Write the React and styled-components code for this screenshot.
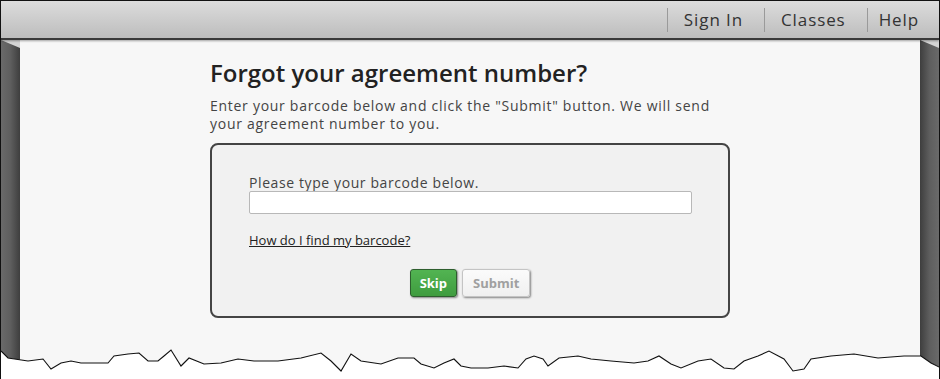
import React from "react";
import styled, { createGlobalStyle } from "styled-components";

const GlobalStyle = createGlobalStyle`
  html, body {
    margin: 0;
    padding: 0;
    background: #ffffff;
    font-family: "Open Sans", "Liberation Sans", sans-serif;
  }
`;

const navItems = ["Sign In", "Classes", "Help"];

// torn paper edge, sampled from the screenshot
const tear = [
  [0, 350], [7, 357], [27, 360], [42, 358], [50, 368], [60, 362], [70, 360],
  [80, 362], [107, 362], [113, 355], [127, 353], [138, 352], [147, 360],
  [157, 360], [163, 355], [170, 349], [180, 365], [188, 357], [203, 363],
  [220, 362], [237, 358], [253, 360], [277, 360], [300, 357], [320, 352],
  [330, 360], [340, 370], [350, 353], [360, 360], [380, 363], [397, 357],
  [413, 357], [420, 363], [433, 367], [443, 362], [453, 358], [460, 365],
  [470, 367], [487, 367], [503, 365], [517, 367], [525, 358], [533, 355],
  [542, 358], [547, 365], [558, 357], [577, 355], [590, 358], [610, 360],
  [633, 362], [647, 360], [658, 355], [670, 363], [680, 367], [697, 360],
  [710, 358], [723, 367], [733, 368], [743, 360], [757, 355], [768, 350],
  [783, 358], [792, 370], [803, 368], [810, 358], [830, 355], [853, 353],
  [877, 357], [903, 355], [920, 355], [930, 362], [940, 367],
];

function App() {
  const line = tear.map((p) => p.join(",")).join(" ");
  const fill = `${line} 940,379 0,379`;

  return (
    <>
      <GlobalStyle />
      <Frame>
        <TopBar>
          <Nav>
            {navItems.map((item) => (
              <NavLink key={item}>{item}</NavLink>
            ))}
          </Nav>
        </TopBar>
        <Body>
          <SideStrip />
          <Content>
            <Column>
              <Title>Forgot your agreement number?</Title>
              <Intro>
                Enter your barcode below and click the "Submit" button. We will
                send your agreement number to you.
              </Intro>
              <Card>
                <Label>Please type your barcode below.</Label>
                <Input type="text" />
                <HelpLink href="#">How do I find my barcode?</HelpLink>
                <Buttons>
                  <Button primary>Skip</Button>
                  <Button>Submit</Button>
                </Buttons>
              </Card>
            </Column>
          </Content>
          <SideStrip right />
        </Body>
        <Tear viewBox="0 0 940 379" preserveAspectRatio="none">
          <polygon points={fill} fill="#ffffff" />
          <polyline points={line} fill="none" stroke="#111" strokeWidth="1.1" />
        </Tear>
      </Frame>
    </>
  );
}

export default App;

const Frame = styled.div`
  position: relative;
  width: 940px;
  height: 379px;
  overflow: hidden;
  display: flex;
  flex-direction: column;
  box-sizing: border-box;
  border: 1px solid #111;
  border-bottom: none;
`;

const TopBar = styled.header`
  height: 37px;
  flex-shrink: 0;
  background: linear-gradient(to bottom, #dcdcdc, #bdbdbd);
  border-bottom: 2px solid #3a3a3a;
  box-shadow: 0 1px 2px rgba(0, 0, 0, 0.35);
  display: flex;
  justify-content: flex-end;
  align-items: center;
  position: relative;
  z-index: 1;
`;

const Nav = styled.nav`
  display: flex;
  align-items: center;
  height: 100%;
`;

const NavLink = styled.span`
  display: flex;
  align-items: center;
  height: 24px;
  padding: 0 21px 0 16px;
  border-left: 1px solid #9a9a9a;
  font-size: 17px;
  letter-spacing: 0.9px;
  color: #333;
  cursor: pointer;

  &:last-child {
    padding: 0 20px 0 11px;
  }
`;

const Body = styled.div`
  flex: 1;
  display: flex;
`;

const SideStrip = styled.div`
  width: 19px;
  flex-shrink: 0;
  position: relative;
  background: ${({ right }) =>
    right
      ? "linear-gradient(to right, #3e3e3e, #5e5e5e 50%, #6a6a6a)"
      : "linear-gradient(to right, #6a6a6a, #5e5e5e 50%, #3e3e3e)"};

  &::before {
    content: "";
    position: absolute;
    top: 0;
    left: 0;
    width: 100%;
    height: 8px;
    background: #d4d4d4;
    clip-path: polygon(0 0, 100% 0, 100% 100%);
  }
`;

const Content = styled.main`
  flex: 1;
  background: #f7f7f7;
  display: flex;
  justify-content: center;
`;

const Column = styled.div`
  width: 520px;
  padding-top: 17px;
`;

const Title = styled.h1`
  margin: 0;
  font-size: 24px;
  font-weight: 600;
  color: #222;
  line-height: 32px;
`;

const Intro = styled.p`
  margin: 8px 0 10px;
  font-size: 14px;
  line-height: 18px;
  letter-spacing: 0.72px;
  color: #444;
`;

const Card = styled.section`
  box-sizing: border-box;
  width: 520px;
  height: 175px;
  border: 2px solid #444;
  border-radius: 8px;
  background: #f1f1f1;
  padding: 30px 37px 0;
  display: flex;
  flex-direction: column;
  align-items: flex-start;
`;

const Label = styled.label`
  font-size: 14px;
  line-height: 16px;
  letter-spacing: 0.6px;
  color: #444;
`;

const Input = styled.input`
  box-sizing: border-box;
  width: 443px;
  height: 23px;
  margin: 0;
  border: 1px solid #b8b8b8;
  border-radius: 2px;
  background: #fff;
`;

const HelpLink = styled.a`
  margin-top: 18px;
  font-size: 13px;
  line-height: 17px;
  color: #222;
  text-decoration: underline;
`;

const Buttons = styled.div`
  align-self: stretch;
  display: flex;
  justify-content: center;
  gap: 5px;
  margin-top: 20px;
`;

const Button = styled.button`
  box-sizing: border-box;
  height: 28px;
  padding: 0 ${({ primary }) => (primary ? "9px" : "10px")};
  font-family: "Open Sans", "Liberation Sans", sans-serif;
  font-size: 13px;
  font-weight: 700;
  border-radius: 3px;
  color: ${({ primary }) => (primary ? "#fff" : "#a0a0a0")};
  background: ${({ primary }) =>
    primary
      ? "linear-gradient(to bottom, #52b452, #3f9c3f)"
      : "linear-gradient(to bottom, #fbfbfb, #f0f0f0)"};
  border: 1px solid ${({ primary }) => (primary ? "#2e5e2e" : "#c4c4c4")};
  box-shadow: 1px 1px 2px rgba(0, 0, 0, 0.45);
  cursor: pointer;
`;

const Tear = styled.svg`
  position: absolute;
  left: 0;
  top: 0;
  width: 940px;
  height: 379px;
  pointer-events: none;
  z-index: 2;
`;
